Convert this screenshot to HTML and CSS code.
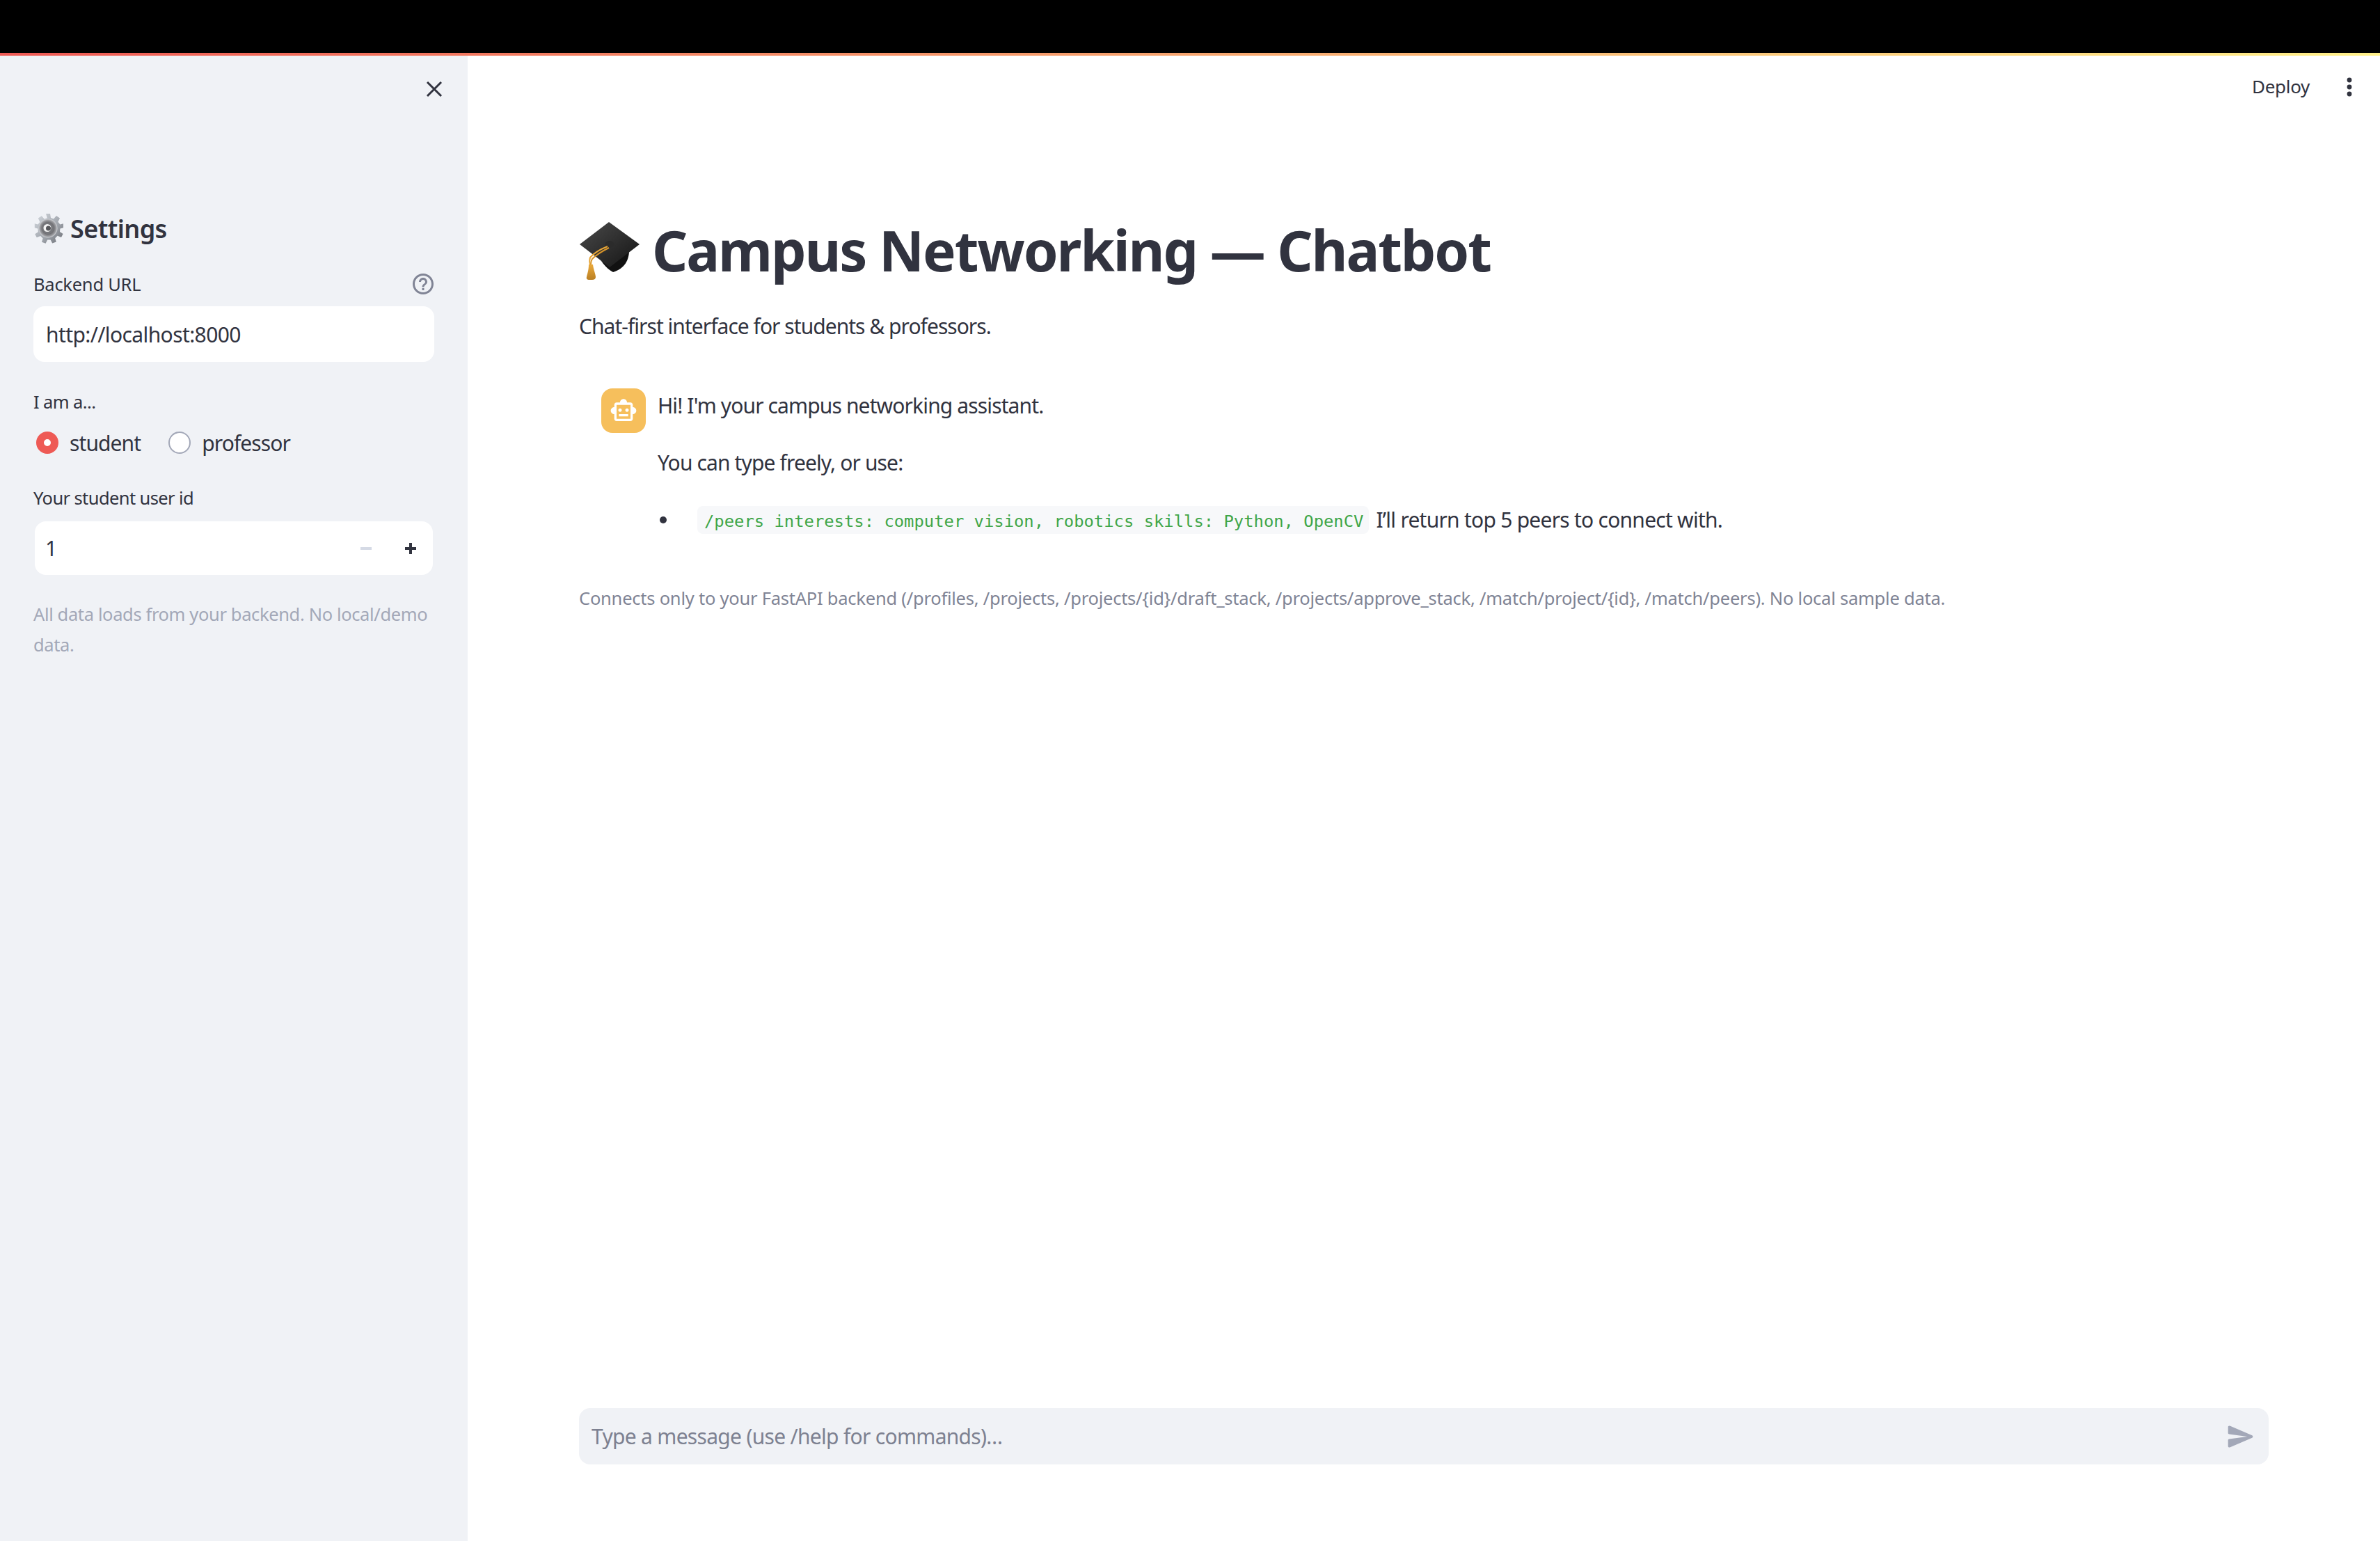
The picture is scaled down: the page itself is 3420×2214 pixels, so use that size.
FILE: index.html
```html
<!DOCTYPE html>
<html lang="en">
  <head>
    <meta charset="UTF-8" />
    <meta name="viewport" content="width=device-width, initial-scale=1.0" />
    <title>Campus Networking — Chatbot</title>
    <link rel="stylesheet" href="styles.css">
  </head>
  <body>
    <div class="browser-bar"></div>
    <div class="accent-line"></div>

    <div class="app">
      <!-- Sidebar -->
      <aside class="sidebar">
        <div class="sidebar-top">
          <svg class="close-icon" viewBox="0 0 24 24"><path d="M2 2 22 22M22 2 2 22" /></svg>
        </div>

        <h3 class="settings-title">
          <svg class="gear" viewBox="0 0 44 44">
            <defs>
              <linearGradient id="gearBody" x1="0" y1="0" x2="1" y2="1">
                <stop offset="0" stop-color="#d5dae0" />
                <stop offset="0.55" stop-color="#a2a7ae" />
                <stop offset="1" stop-color="#6a6d73" />
              </linearGradient>
              <radialGradient id="gearRing">
                <stop offset="0.3" stop-color="#f2f2f2" />
                <stop offset="0.6" stop-color="#6c6c70" />
                <stop offset="0.85" stop-color="#9b9ca0" />
                <stop offset="1" stop-color="#d0d2d6" />
              </radialGradient>
            </defs>
            <path fill="url(#gearBody)" d="M19 1h6l1 6 4 1.600 4-4.600 5 3.400-2.600 5.400 3 3.600 5.600-1.400 0 6-5.600 1.400-.4 4.600 4.600 3-2.600 5-5.400-2.200-3.400 3.400 1.600 5.400-5.600 2-2.600-5.200-4.400.2-2.600 5.200-5.600-2 1.600-5.400-3.400-3.400-5.400 2.200-2.600-5 4.600-3-.4-4.600-4.600-1.400 0-6 4.600 1.400 3-3.600-2.600-5.400 5-3.400 4 4.600 4-1.600z" />
            <circle cx="22" cy="22" r="13.500" fill="url(#gearRing)" />
            <circle cx="22" cy="22" r="8" fill="#77787c" />
            <circle cx="21" cy="21.500" r="5.500" fill="#f4f4f4" />
            <circle cx="22.500" cy="22" r="3.500" fill="#55565a" />
          </svg>
          Settings
        </h3>

        <div class="field-label url-label">
          <span>Backend URL</span>
          <svg class="help-icon" viewBox="0 0 24 24"><path d="M11 18h2v-2h-2v2zm1-16C6.480 2 2 6.480 2 12s4.480 10 10 10 10-4.480 10-10S17.520 2 12 2zm0 18c-4.410 0-8-3.590-8-8s3.590-8 8-8 8 3.590 8 8-3.590 8-8 8zm0-14c-2.210 0-4 1.790-4 4h2c0-1.100.9-2 2-2s2 .9 2 2c0 2-3 1.750-3 5h2c0-2.250 3-2.500 3-5 0-2.210-1.790-4-4-4z" /></svg>
        </div>
        <div class="text-input">http://localhost:8000</div>

        <div class="field-label role-label">I am a...</div>
        <div class="radio-group">
          <div class="radio-option">
            <span class="radio radio-on"></span>
            <span class="radio-text">student</span>
          </div>
          <div class="radio-option">
            <span class="radio"></span>
            <span class="radio-text">professor</span>
          </div>
        </div>

        <div class="field-label id-label">Your student user id</div>
        <div class="number-input">
          <span class="number-value">1</span>
          <span class="step step-minus"></span>
          <span class="step step-plus"></span>
        </div>

        <p class="sidebar-note">All data loads from your backend. No local/demo data.</p>
      </aside>

      <!-- Main area -->
      <main class="main">
        <div class="toolbar">
          <span class="deploy">Deploy</span>
          <svg class="menu-dots" viewBox="0 0 8 28">
            <circle cx="4" cy="4" r="3.400" />
            <circle cx="4" cy="14" r="3.400" />
            <circle cx="4" cy="24" r="3.400" />
          </svg>
        </div>

        <h1 class="page-title">
          <svg class="cap" viewBox="0 0 86 84">
            <defs>
              <linearGradient id="capTop" x1="0" y1="0" x2="1" y2="1">
                <stop offset="0" stop-color="#4a4a4a" />
                <stop offset="1" stop-color="#141414" />
              </linearGradient>
              <linearGradient id="tassel" x1="0" y1="0" x2="0" y2="1">
                <stop offset="0" stop-color="#eaa93a" />
                <stop offset="1" stop-color="#b97f24" />
              </linearGradient>
            </defs>
            <path fill="#111" d="M24 40 71 38C72 56 64 68 48 73 38 68 28 56 24 40z" />
            <path fill="url(#capTop)" d="M42 1 86 33 43 66 0 33z" />
            <ellipse cx="43" cy="33" rx="6.500" ry="5" fill="#2b2b2b" />
            <path fill="none" stroke="#e6a537" stroke-width="2" d="M40 36C30 40 20 46 15 52 14 55 14 58 15 62" />
            <path fill="none" stroke="#d8952a" stroke-width="2" d="M42 38C32 43 24 48 18 54 16 57 16 59 16 62" />
            <path fill="url(#tassel)" d="M13 62h6c1 8 4 14 4 18 0 2.500-2 4-5 4h-4c-3 0-5-1.500-4-4 1-5 3-10 3-18z" />
          </svg>
          Campus Networking — Chatbot
        </h1>
        <p class="subtitle">Chat-first interface for students &amp; professors.</p>

        <div class="chat-message">
          <div class="avatar">
            <svg viewBox="0 0 24 24"><path d="M20 9V7c0-1.100-.9-2-2-2h-3c0-1.660-1.340-3-3-3S9 3.340 9 5H6c-1.100 0-2 .9-2 2v2c-1.660 0-3 1.340-3 3s1.340 3 3 3v4c0 1.100.9 2 2 2h12c1.100 0 2-.9 2-2v-4c1.660 0 3-1.340 3-3s-1.340-3-3-3zm-2 10H6V7h12v12zm-9-6c-.83 0-1.500-.67-1.500-1.500S8.170 10 9 10s1.500.67 1.500 1.500S9.830 13 9 13zm7.500-1.500c0 .83-.67 1.500-1.500 1.500s-1.500-.67-1.500-1.500.67-1.500 1.500-1.500 1.500.67 1.500 1.500zM8 15h8v2H8v-2z" /></svg>
          </div>
          <div class="message-body">
            <p>Hi! I'm your campus networking assistant.</p>
            <p>You can type freely, or use:</p>
            <ul class="command-list">
              <li>
                <span class="bullet"></span>
                <code>/peers interests: computer vision, robotics skills: Python, OpenCV</code>
                <span class="after-code">I’ll return top 5 peers to connect with.</span>
              </li>
            </ul>
          </div>
        </div>

        <p class="backend-note">Connects only to your FastAPI backend (/profiles, /projects, /projects/{id}/draft_stack, /projects/approve_stack, /match/project/{id}, /match/peers). No local sample data.</p>

        <div class="chat-input">
          <span class="chat-placeholder">Type a message (use /help for commands)…</span>
          <svg class="send-icon" viewBox="0 0 24 24"><path d="M3.400 20.400l17.450-7.480c.81-.35.81-1.490 0-1.840L3.400 3.600c-.66-.29-1.390.2-1.390.91L2 9.120c0 .5.37.93.87.99L17 12 2.870 13.880c-.5.07-.87.5-.87 1l.01 4.610c0 .71.73 1.200 1.390.91z" /></svg>
        </div>
      </main>
    </div>
  </body>
</html>
```

FILE: styles.css
```css
* {
  box-sizing: border-box;
}
html,
body {
  height: 100%;
}
body {
  margin: 0;
  display: flex;
  flex-direction: column;
  font-family: "Noto Sans", sans-serif;
  color: #31333f;
  background-color: #fff;
  overflow: hidden;
}
p,
h1,
h3,
ul {
  margin: 0;
  padding: 0;
}
.browser-bar {
  height: 76px;
  background-color: #000;
}
.accent-line {
  height: 4px;
  background: linear-gradient(90deg, #ee5a55, #fff08a);
}
.app {
  flex: 1;
  display: flex;
  min-height: 0;
}

/* Sidebar */
.sidebar {
  width: 672px;
  padding: 0 48px;
  background-color: #f0f2f6;
}
.sidebar-top {
  height: 96px;
  display: flex;
  align-items: center;
  justify-content: flex-end;
}
.close-icon {
  width: 24px;
  height: 24px;
  margin-right: -12px;
  fill: none;
  stroke: #31333f;
  stroke-width: 3;
}
.settings-title {
  display: flex;
  align-items: center;
  gap: 10px;
  height: 60px;
  margin-top: 122px;
  font-size: 36px;
  font-weight: 600;
  letter-spacing: -0.6px;
}
.gear {
  width: 44px;
  height: 44px;
  margin-left: -1px;
}
.field-label {
  display: flex;
  align-items: center;
  justify-content: space-between;
  height: 40px;
  margin-top: 30px;
  font-size: 25.5px;
  letter-spacing: -0.6px;
}
.url-label {
  letter-spacing: -0.25px;
}
.help-icon {
  width: 36px;
  height: 36px;
  margin-right: -2px;
  fill: #808495;
}
.text-input {
  display: flex;
  align-items: center;
  height: 80px;
  margin-top: 12px;
  padding-left: 18px;
  background-color: #fff;
  border-radius: 16px;
  font-size: 30px;
  letter-spacing: -0.6px;
}
.role-label {
  margin-top: 37px;
}
.radio-group {
  display: flex;
  gap: 40px;
  height: 40px;
  margin-top: 19px;
  padding-left: 4px;
}
.radio-option {
  display: flex;
  align-items: center;
  gap: 16px;
}
.radio {
  width: 32px;
  height: 32px;
  background-color: #fff;
  border: 2px solid #a3a8b8;
  border-radius: 50%;
}
.radio-on {
  border: 11px solid #ee5a55;
}
.radio-text {
  font-size: 30px;
  letter-spacing: -0.9px;
}
.id-label {
  margin-top: 39px;
}
.number-input {
  display: flex;
  align-items: center;
  height: 77px;
  margin: 14px 2px 0;
  padding: 0 24px 0 15px;
  background-color: #fff;
  border-radius: 16px;
}
.number-value {
  flex: 1;
  font-size: 30px;
}
.step {
  position: relative;
  width: 16px;
  height: 4px;
  background-color: #31333f;
}
.step-minus {
  margin-right: 48px;
  background-color: #d5dae5;
}
.step-plus::after {
  content: "";
  position: absolute;
  left: 6px;
  top: -6px;
  width: 4px;
  height: 16px;
  background-color: #31333f;
}
.sidebar-note {
  margin-top: 34px;
  font-size: 25.5px;
  line-height: 44px;
  letter-spacing: -0.37px;
  color: #a3a8b8;
}

/* Main area */
.main {
  flex: 1;
  display: flex;
  flex-direction: column;
  padding: 0 160px 110px 160px;
}
.toolbar {
  display: flex;
  align-items: center;
  justify-content: flex-end;
  gap: 53px;
  height: 88px;
  margin-bottom: 2px;
  margin-right: -120px;
}
.deploy {
  font-size: 26px;
  letter-spacing: -0.3px;
}
.menu-dots {
  width: 8px;
  height: 28px;
  margin-top: 2px;
  fill: #31333f;
}
.page-title {
  display: flex;
  align-items: center;
  gap: 18px;
  height: 88px;
  margin-top: 144px;
  font-size: 80px;
  font-weight: 700;
  letter-spacing: -2.1px;
  white-space: nowrap;
}
.cap {
  width: 86px;
  height: 84px;
  margin-left: 1px;
  margin-top: 4px;
}
.subtitle {
  margin-top: 47px;
  font-size: 30px;
  line-height: 40px;
  letter-spacing: -0.97px;
}
.chat-message {
  display: flex;
  gap: 17px;
  margin-top: 69px;
  margin-left: 32px;
}
.avatar {
  display: flex;
  align-items: center;
  justify-content: center;
  width: 64px;
  height: 64px;
  background-color: #f6bf5c;
  border-radius: 16px;
}
.avatar svg {
  width: 40px;
  height: 40px;
  fill: #fff;
}
.message-body {
  padding-top: 5px;
  font-size: 30px;
  line-height: 40px;
  letter-spacing: -0.87px;
}
.message-body p {
  margin-bottom: 42px;
}
.command-list {
  list-style: none;
  margin-top: 1px;
}
.command-list li {
  display: flex;
  align-items: center;
  white-space: nowrap;
}
.bullet {
  width: 10px;
  height: 10px;
  margin: 0 44px 0 3px;
  background-color: #31333f;
  border-radius: 50%;
}
code {
  padding: 0 8px 0 10px;
  height: 40px;
  line-height: 45px;
  font-family: "DejaVu Sans Mono", monospace;
  font-size: 23.85px;
  letter-spacing: 0;
  color: #3fa648;
  background-color: #f7f8fa;
  border-radius: 8px;
}
.after-code {
  margin-left: 10px;
  letter-spacing: -0.75px;
}
.backend-note {
  margin-top: 72px;
  font-size: 25.5px;
  line-height: 40px;
  letter-spacing: -0.23px;
  color: #808495;
  white-space: nowrap;
}
.chat-input {
  display: flex;
  align-items: center;
  justify-content: space-between;
  height: 81px;
  margin-top: auto;
  padding: 0 18px;
  background-color: #f0f2f6;
  border-radius: 16px;
}
.chat-placeholder {
  font-size: 30px;
  letter-spacing: -0.7px;
  color: #7d8191;
}
.send-icon {
  width: 44px;
  height: 44px;
  fill: #a3a8b8;
}
```
